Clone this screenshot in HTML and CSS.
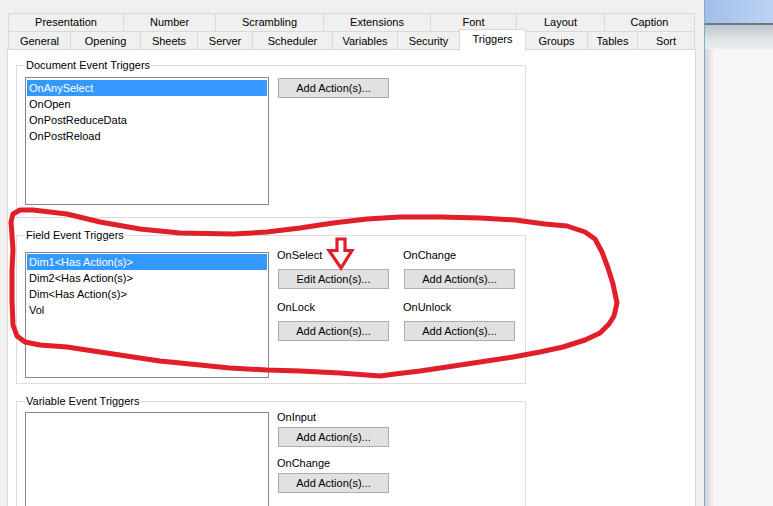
FILE: index.html
```html
<!DOCTYPE html>
<html lang="en">
<head>
  <meta charset="UTF-8" />
  <title>Document Properties - Triggers</title>
  <link rel="stylesheet" href="styles.css">
</head>
<body>
  <div class="dialog">
    <div class="tabs">
      <div class="tabrow back">
        <div class="tab">Presentation</div>
        <div class="tab">Number</div>
        <div class="tab">Scrambling</div>
        <div class="tab">Extensions</div>
        <div class="tab">Font</div>
        <div class="tab">Layout</div>
        <div class="tab">Caption</div>
      </div>
      <div class="tabrow front">
        <div class="tab">General</div>
        <div class="tab">Opening</div>
        <div class="tab">Sheets</div>
        <div class="tab">Server</div>
        <div class="tab">Scheduler</div>
        <div class="tab">Variables</div>
        <div class="tab">Security</div>
        <div class="tab active">Triggers</div>
        <div class="tab">Groups</div>
        <div class="tab">Tables</div>
        <div class="tab">Sort</div>
      </div>
    </div>

    <div class="panel">
      <!-- document triggers -->
      <fieldset class="grp grp-doc">
        <legend>Document Event Triggers</legend>
        <div class="grp-body">
          <ul class="listbox">
            <li class="sel">OnAnySelect</li>
            <li>OnOpen</li>
            <li>OnPostReduceData</li>
            <li>OnPostReload</li>
          </ul>
          <div class="acts">
            <button>Add Action(s)...</button>
          </div>
        </div>
      </fieldset>

      <!-- field triggers -->
      <fieldset class="grp grp-field">
        <legend>Field Event Triggers</legend>
        <div class="grp-body">
          <ul class="listbox">
            <li class="sel">Dim1&lt;Has Action(s)&gt;</li>
            <li>Dim2&lt;Has Action(s)&gt;</li>
            <li>Dim&lt;Has Action(s)&gt;</li>
            <li>Vol</li>
          </ul>
          <div class="acts grid">
            <div class="trig"><span>OnSelect</span><button>Edit Action(s)...</button></div>
            <div class="trig"><span>OnChange</span><button>Add Action(s)...</button></div>
            <div class="trig"><span>OnLock</span><button>Add Action(s)...</button></div>
            <div class="trig"><span>OnUnlock</span><button>Add Action(s)...</button></div>
          </div>
        </div>
      </fieldset>

      <!-- variable triggers -->
      <fieldset class="grp grp-var">
        <legend>Variable Event Triggers</legend>
        <div class="grp-body">
          <ul class="listbox"></ul>
          <div class="acts">
            <div class="trig"><span>OnInput</span><button>Add Action(s)...</button></div>
            <div class="trig"><span>OnChange</span><button>Add Action(s)...</button></div>
          </div>
        </div>
      </fieldset>
    </div>
  </div>

  <div class="otherwin">
    <div class="ow-title"></div>
    <div class="ow-bar"></div>
    <div class="ow-client"></div>
  </div>

  <!-- hand drawn markup on top of the screenshot -->
  <svg class="markup" width="773" height="506" viewBox="0 0 773 506">
    <polyline class="loop" points="11,222 13,214 20,210 33,210 67,214 100,222 140,229 180,233 233,234 267,232 300,228 333,223 367,219 400,217 440,217 480,218 515,220 545,224 567,226 585,232 595,239 602,252 608,268 613,284 617,303 614,316 609,324 600,333 585,340 563,347 540,352 513,357 480,362 447,367 420,371 395,374 380,376 340,373 300,371 267,370 230,368 200,365 160,361 133,357 100,352 67,347 40,345 25,342 17,336 13,325 12,300 12,270 13,250 12,235 11,222"/>
    <polygon class="arrow" points="337,239 345,239 345,250.5 352,250.5 341,268 329,250.5 337,250.5"/>
  </svg>
</body>
</html>
```

FILE: styles.css
```css
html,body{margin:0;padding:0;width:100%;height:100%;overflow:hidden}
body{display:flex;background:#f0f0f0;font-family:'Liberation Sans',Arial,sans-serif;font-size:11px;color:#000}

/* dialog + tabs */
.dialog{width:704px;flex:none;display:flex;flex-direction:column;padding-top:13px;box-sizing:border-box}
.tabrow{display:grid;height:18px;width:687px;margin-left:8px;box-sizing:border-box;border-right:1px solid #d9d9d9}
.tabrow.back{grid-template-columns:115px 92px 108px 107px 86px 88px 1fr}
.tabrow.front{grid-template-columns:62px 70px 57px 55px 80px 65px 62px 66px 62px 50px 1fr}
.tab{border-top:1px solid #d9d9d9;border-left:1px solid #d9d9d9;line-height:17px;text-align:center;white-space:nowrap;color:#000}
.tabrow.front .tab{line-height:18px}
.tab.active{position:relative;z-index:2;margin-top:-2px;height:21px;background:#fff;border-right:1px solid #d9d9d9;margin-right:-1px;line-height:19px}

.panel{flex:1;margin-left:7px;width:689px;box-sizing:border-box;background:#fff;border:1px solid #d9d9d9;border-bottom:none;padding-left:8px;overflow:hidden}

/* group boxes */
.grp{width:510px;box-sizing:border-box;margin:10px 0 0;padding:0 8px;border:1px solid #dcdcdc;min-width:0}
.grp legend{padding:0 1px;line-height:14px}
.grp-body{display:flex;align-items:flex-start}
.grp-doc{margin-top:8px}
.grp-doc .grp-body{padding:5px 0 12px}
.grp-doc .acts{margin-top:1px}
.grp-field .grp-body{padding:6px 0 5px}
.grp-field .listbox{margin-top:4px;height:126px}
.grp-var .grp-body{padding-top:2px}
.grp-var .listbox{margin-top:2px;height:200px}

.listbox{list-style:none;margin:0;padding:1px;width:244px;height:128px;box-sizing:border-box;border:1px solid #828790;background:#fff}
.listbox li{height:16px;line-height:16px;padding-left:2px;white-space:nowrap}
.listbox li.sel{background:#3399ff;color:#fff}
.grp-doc .listbox{padding-top:2px}

.acts{margin-left:9px}
.acts.grid{display:grid;grid-template-columns:111px 111px;column-gap:15px;row-gap:11px}
.trig{display:flex;flex-direction:column;align-items:flex-start}
.trig span{line-height:14px;margin-left:-1px}
.grp-field .trig button{margin-top:7px}
.grp-var .trig button{margin-top:3px}
.grp-var .trig + .trig{margin-top:9px}

button{width:111px;height:20px;padding:0;font:inherit;color:#000;background:#e1e1e1;border:1px solid #adadad;border-radius:0}

/* window behind, on the right */
.otherwin{flex:1;display:flex;flex-direction:column;border-left:1px solid #86a9cc}
.ow-title{height:23px;background:linear-gradient(to right,#a2bfe8,#bcd3f5)}
.ow-bar{height:24px;border-top:2px solid #70777e;background:linear-gradient(#bcc6cc,#dfe4e6 60%,#eceeef)}
.ow-client{flex:1;background:linear-gradient(to right,#d2d2d2,#f6f6f6 9px)}

/* red annotation */
.markup{position:absolute;left:0;top:0;pointer-events:none}
.loop{fill:none;stroke:#e01f2a;stroke-width:5;stroke-linejoin:round;stroke-linecap:round}
.arrow{fill:none;stroke:#e01f2a;stroke-width:3.2;stroke-linejoin:miter}
```
